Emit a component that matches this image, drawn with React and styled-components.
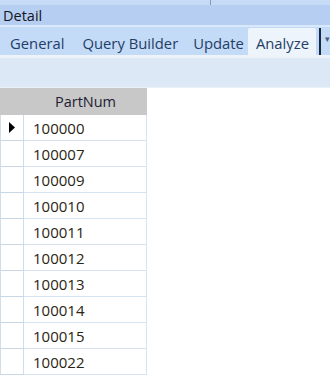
import React from "react";
import styled, { createGlobalStyle } from "styled-components";

const GlobalStyle = createGlobalStyle`
  html, body {
    margin: 0;
    padding: 0;
    background: #ffffff;
  }
  body {
    font-family: "Open Sans", "Noto Sans", sans-serif;
    width: 330px;
    height: 378px;
    overflow: hidden;
  }
`;

const Page = styled.div`
  display: flex;
  flex-direction: column;
  width: 330px;
  height: 378px;
  overflow: hidden;
`;

const TopStrip = styled.div`
  height: 5px;
  background: #c6dbf6;
  display: flex;
`;

const TopTick = styled.div`
  margin-left: 210px;
  width: 1px;
  height: 5px;
  background: #8a9ab0;
`;

const TitleBar = styled.div`
  height: 20px;
  background: #b5cef2;
  color: #15151f;
  font-size: 14.5px;
  line-height: 21px;
  padding-left: 3px;
  border-bottom: 2px solid #dae8fb;
`;

const TabStrip = styled.div`
  height: 28px;
  background: #c4dbf8;
  display: flex;
  align-items: flex-end;
  border-bottom: 3px solid #eef3fa;
  overflow: hidden;
`;

const Tab = styled.div`
  flex-shrink: 0;
  height: 27px;
  line-height: 30px;
  font-size: 14.8px;
  color: #233d66;
  padding: 0 ${(p) => p.$right}px 0 ${(p) => p.$left}px;
  background: ${(p) => (p.$active ? "#eef4fc" : "transparent")};
  border-radius: ${(p) => (p.$active ? "2px 2px 0 0" : "0")};
  white-space: nowrap;
`;

const Divider = styled.div`
  flex-shrink: 0;
  width: 2px;
  height: 27px;
  background: #1a2740;
  margin-left: 3px;
`;

const Arrow = styled.div`
  flex-shrink: 0;
  margin-left: 4px;
  font-size: 9px;
  color: #4a5a78;
  height: 27px;
  line-height: 22px;
`;

const Toolbar = styled.div`
  height: 29px;
  background: #dde8f6;
  border-bottom: 1px solid #eaf0f8;
`;

const Grid = styled.div`
  display: grid;
  grid-template-columns: 24px 123px;
  grid-template-rows: 27px;
  grid-auto-rows: 26px;
  width: 147px;
`;

const HeaderCell = styled.div`
  background: #c8c8c8;
  color: #1d1d33;
  font-size: 14.5px;
  line-height: 27px;
  text-align: ${(p) => (p.$center ? "center" : "left")};
`;

const RowHead = styled.div`
  border-left: 1px solid #d4dce6;
  border-right: 1px solid #cfdcec;
  border-bottom: 1px solid #c9d6e6;
  background: #ffffff;
  display: flex;
  align-items: center;
  justify-content: center;
  box-sizing: border-box;
`;

const Cell = styled.div`
  border-right: 1px solid #d6e3f3;
  border-bottom: 1px solid #d6e3f3;
  color: #2a2414;
  font-size: 15px;
  line-height: 26px;
  padding-left: 9px;
  box-sizing: border-box;
`;

const Pointer = styled.svg`
  width: 8px;
  height: 11px;
`;

const parts = [
  "100000",
  "100007",
  "100009",
  "100010",
  "100011",
  "100012",
  "100013",
  "100014",
  "100015",
  "100022",
];

export default function App() {
  return (
    <Page>
      <GlobalStyle />
      <TopStrip>
        <TopTick />
      </TopStrip>
      <TitleBar>Detail</TitleBar>
      <TabStrip>
        <Tab $left={10} $right={9}>General</Tab>
        <Tab $left={9} $right={7}>Query Builder</Tab>
        <Tab $left={8} $right={4}>Update</Tab>
        <Tab $active $left={8} $right={7}>Analyze</Tab>
        <Divider />
        <Arrow>▾</Arrow>
      </TabStrip>
      <Toolbar />
      <Grid>
        <HeaderCell />
        <HeaderCell $center>PartNum</HeaderCell>
        {parts.map((p, i) => (
          <React.Fragment key={p}>
            <RowHead>
              {i === 0 && (
                <Pointer viewBox="0 0 8 11">
                  <path d="M1 0 L7 5.5 L1 11 Z" fill="#000" />
                </Pointer>
              )}
            </RowHead>
            <Cell>{p}</Cell>
          </React.Fragment>
        ))}
      </Grid>
    </Page>
  );
}
